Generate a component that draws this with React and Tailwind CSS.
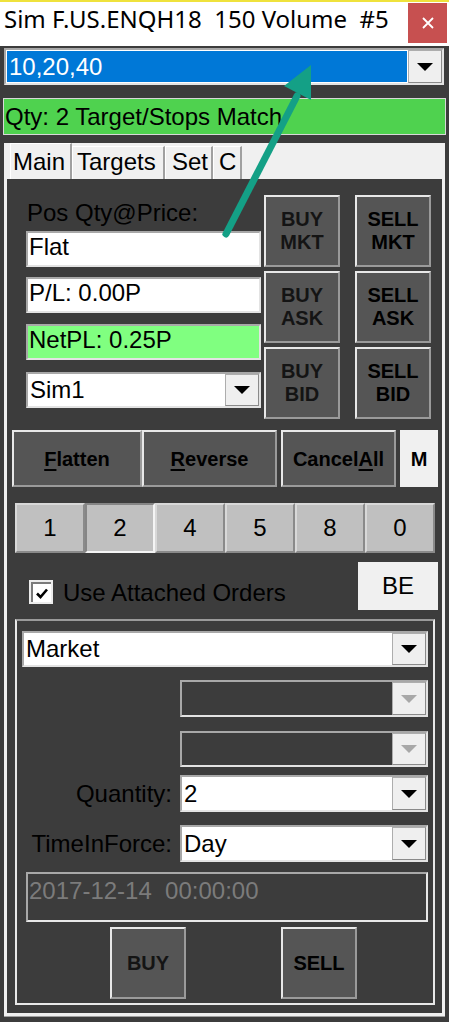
import React from 'react';

const Tri = ({ color = '#000' }) => (
    <svg width="16" height="8" viewBox="0 0 16 8">
        <path d="M0 0h16L8 8z" fill={color} />
    </svg>
);

const DropBtn = ({ disabled }) => (
    <div className="flex w-[34px] shrink-0 items-center justify-center border border-[#adadad] border-r-[#8a8a8a] border-b-[#8a8a8a] bg-[#efefef]">
        <Tri color={disabled ? '#a8a8a8' : '#000'} />
    </div>
);

function Combo({ value, className = '', disabled }) {
    return (
        <div className={`flex border-2 border-[#e3e3e3] border-t-[#a8a8a8] border-l-[#a8a8a8] ${disabled ? 'bg-[#3c3c3c]' : 'bg-white'} ${className}`}>
            <div className="flex flex-1 items-center pl-[2px] text-black">{value}</div>
            <DropBtn disabled={disabled} />
        </div>
    );
}

function TextBox({ value, className = '' }) {
    return (
        <div className={`h-[36px] border-2 border-[#e3e3e3] border-t-[#a8a8a8] border-l-[#a8a8a8] pt-[2px] pl-[1px] text-black ${className}`}>
            {value}
        </div>
    );
}

function DarkBtn({ top, bottom, dark, className = '' }) {
    return (
        <div className={`flex flex-col items-center justify-center border-2 border-[#e8e8e8] border-r-[#9a9a9a] border-b-[#9a9a9a] bg-[#555555] text-[20px] font-bold leading-[23px] ${dark ? 'text-black' : 'text-[#141414]'} ${className}`}>
            <span>{top}</span>
            {bottom && <span>{bottom}</span>}
        </div>
    );
}

function NumBtn({ n, active }) {
    return (
        <div className={`flex h-[50px] w-[70px] items-center justify-center bg-[#c0c0c0] text-black border-2 ${active ? 'border-[#f4f4f4] border-t-[#858585] border-l-[#858585]' : 'border-[#d8d8d8] border-r-[#8a8a8a] border-b-[#8a8a8a]'}`}>
            {n}
        </div>
    );
}

function Tab({ label, active, w, pl }) {
    return (
        <div className={`${w} ${active ? 'h-[36px] pt-[6px]' : 'h-[33px] pt-[3px]'} ${pl} border-t border-l border-white border-r-2 border-r-[#a0a0a0] bg-[#f0f0f0] text-black`}>
            {label}
        </div>
    );
}

export default function App() {
    return (
        <div className="relative h-[1022px] w-[449px] overflow-hidden bg-[#3c3c3c] font-['Liberation_Sans',Arial,sans-serif] text-[24px] leading-none text-black">
            <div className="h-[2px] bg-[#efe23c]" />

            <div className="flex h-[44px] bg-white">
                <div className="flex-1 whitespace-pre pl-[4px] pt-[5px] font-['Noto_Sans',sans-serif] text-[24px] text-black">
                    Sim F.US.ENQH18  150 Volume  #5
                </div>
                <div className="mt-[1px] mr-[2px] flex h-[40px] w-[39px] items-center justify-center bg-[#c75050]">
                    <svg width="12" height="12" viewBox="0 0 12 12">
                        <path d="M1 1l10 10M11 1L1 11" stroke="#fff" strokeWidth="1.8" />
                    </svg>
                </div>
            </div>

            <div className="mt-[2px] ml-[4px] flex h-[37px] w-[440px] border-2 border-[#e3e3e3] border-t-[#a8a8a8] border-l-[#a8a8a8] bg-white">
                <div className="m-[1px] flex flex-1 items-center bg-[#0078d7] pl-[2px] text-white">10,20,40</div>
                <DropBtn />
            </div>

            <div className="mt-[13px] ml-[3px] flex h-[37px] w-[443px] items-center border border-[#d8d8d8] bg-[#4fd24f] pl-[1px] text-black">
                Qty: 2 Target/Stops Match
            </div>

            <div className="mt-[8px] ml-[4px] flex h-[874px] w-[441px] flex-col bg-[#f0f0f0] border-b border-b-[#a0a0a0]">
                <div className="flex h-[36px] items-end pl-[6px]">
                    <Tab label="Main" active w="w-[62px]" pl="pl-[2px]" />
                    <Tab label="Targets" w="w-[93px]" pl="pl-[4px]" />
                    <Tab label="Set" w="w-[48px]" pl="pl-[6px]" />
                    <Tab label="C" w="w-[29px]" pl="pl-[5px]" />
                </div>

                <div className="mx-[3px] mb-[3px] flex flex-1 flex-col bg-[#3c3c3c]">
                    <div className="flex pt-[16px]">
                        <div className="ml-[19px] flex w-[235px] flex-col">
                            <div className="h-[36px] pt-[6px] pl-[1px]">Pos Qty@Price:</div>
                            <TextBox value="Flat" className="bg-white" />
                            <TextBox value="P/L: 0.00P" className="mt-[10px] bg-white" />
                            <TextBox value="NetPL: 0.25P" className="mt-[11px] bg-[#80ff80]" />
                            <Combo value="Sim1" className="mt-[12px] h-[36px]" />
                        </div>
                        <div className="ml-[3px] grid grid-cols-[76px_76px] gap-x-[15px] gap-y-[4px]">
                            <DarkBtn top="BUY" bottom="MKT" className="h-[72px]" />
                            <DarkBtn top="SELL" bottom="MKT" dark className="h-[72px]" />
                            <DarkBtn top="BUY" bottom="ASK" className="h-[72px]" />
                            <DarkBtn top="SELL" bottom="ASK" dark className="h-[72px]" />
                            <DarkBtn top="BUY" bottom="BID" className="h-[72px]" />
                            <DarkBtn top="SELL" bottom="BID" dark className="h-[72px]" />
                        </div>
                    </div>

                    <div className="mt-[11px] ml-[5px] flex h-[57px] text-[20px] font-bold text-black">
                        <div className="flex w-[130px] items-center justify-center border-2 border-[#e8e8e8] border-r-[#9a9a9a] border-b-[#9a9a9a] bg-[#555555]">
                            <span><span className="underline underline-offset-[3px]">F</span>latten</span>
                        </div>
                        <div className="flex w-[135px] items-center justify-center border-2 border-[#e8e8e8] border-r-[#9a9a9a] border-b-[#9a9a9a] bg-[#555555]">
                            <span><span className="underline underline-offset-[3px]">R</span>everse</span>
                        </div>
                        <div className="ml-[4px] flex w-[115px] items-center justify-center border-2 border-[#e8e8e8] border-r-[#9a9a9a] border-b-[#9a9a9a] bg-[#555555]">
                            <span>Cancel<span className="underline underline-offset-[3px]">A</span>ll</span>
                        </div>
                        <div className="ml-[4px] flex w-[38px] items-center justify-center bg-[#f0f0f0]">M</div>
                    </div>

                    <div className="mt-[16px] ml-[8px] flex">
                        <NumBtn n="1" />
                        <NumBtn n="2" active />
                        <NumBtn n="4" />
                        <NumBtn n="5" />
                        <NumBtn n="8" />
                        <NumBtn n="0" />
                    </div>

                    <div className="mt-[9px] flex h-[48px]">
                        <div className="ml-[22px] mt-[18px] h-[24px] w-[24px] bg-[#ececec] p-[2px]">
                            <div className="flex h-full w-full items-center justify-center border-t-2 border-l-2 border-[#7a7a7a] bg-white">
                                <svg width="12" height="11" viewBox="0 0 12 11">
                                    <path d="M1 5.5l3.5 3.5L11 1.5" stroke="#000" strokeWidth="2.6" fill="none" />
                                </svg>
                            </div>
                        </div>
                        <div className="ml-[10px] mt-[19px]">Use Attached Orders</div>
                        <div className="ml-auto mr-[4px] flex w-[80px] items-center justify-center bg-[#f0f0f0]">BE</div>
                    </div>

                    <div className="mt-[9px] ml-[8px] flex h-[386px] w-[420px] flex-col border-2 border-[#e8e8e8] border-t-[#9a9a9a] border-l-[#e8e8e8]">
                        <Combo value="Market" className="mt-[10px] ml-[5px] h-[36px] w-[406px]" />
                        <div className="mt-[13px] flex">
                            <div className="w-[163px]" />
                            <Combo value="" disabled className="h-[37px] w-[248px]" />
                        </div>
                        <div className="mt-[14px] flex">
                            <div className="w-[163px]" />
                            <Combo value="" disabled className="h-[36px] w-[248px]" />
                        </div>
                        <div className="mt-[8px] flex">
                            <div className="w-[163px] pt-[7px] pr-[8px] text-right">Quantity:</div>
                            <Combo value="2" className="h-[37px] w-[248px]" />
                        </div>
                        <div className="mt-[13px] flex">
                            <div className="w-[163px] pt-[7px] pr-[8px] text-right">TimeInForce:</div>
                            <Combo value="Day" className="h-[37px] w-[248px]" />
                        </div>
                        <div className="mt-[10px] ml-[9px] h-[50px] w-[402px] border-2 border-[#e8e8e8] border-t-[#a8a8a8] border-l-[#a8a8a8] pt-[5px] pl-[1px] text-[#7b7b7b] whitespace-pre">
                            2017-12-14  00:00:00
                        </div>
                        <div className="mt-[5px] flex">
                            <DarkBtn top="BUY" className="ml-[93px] h-[72px] w-[76px]" />
                            <DarkBtn top="SELL" dark className="ml-[95px] h-[72px] w-[76px]" />
                        </div>
                    </div>
                </div>
            </div>

            <svg className="pointer-events-none absolute left-0 top-0" width="449" height="1022">
                <line x1="226" y1="234" x2="297" y2="96" stroke="#14a086" strokeWidth="7" strokeLinecap="round" />
                <polygon points="311,65 284,86 311,100" fill="#14a086" />
            </svg>
        </div>
    );
}
